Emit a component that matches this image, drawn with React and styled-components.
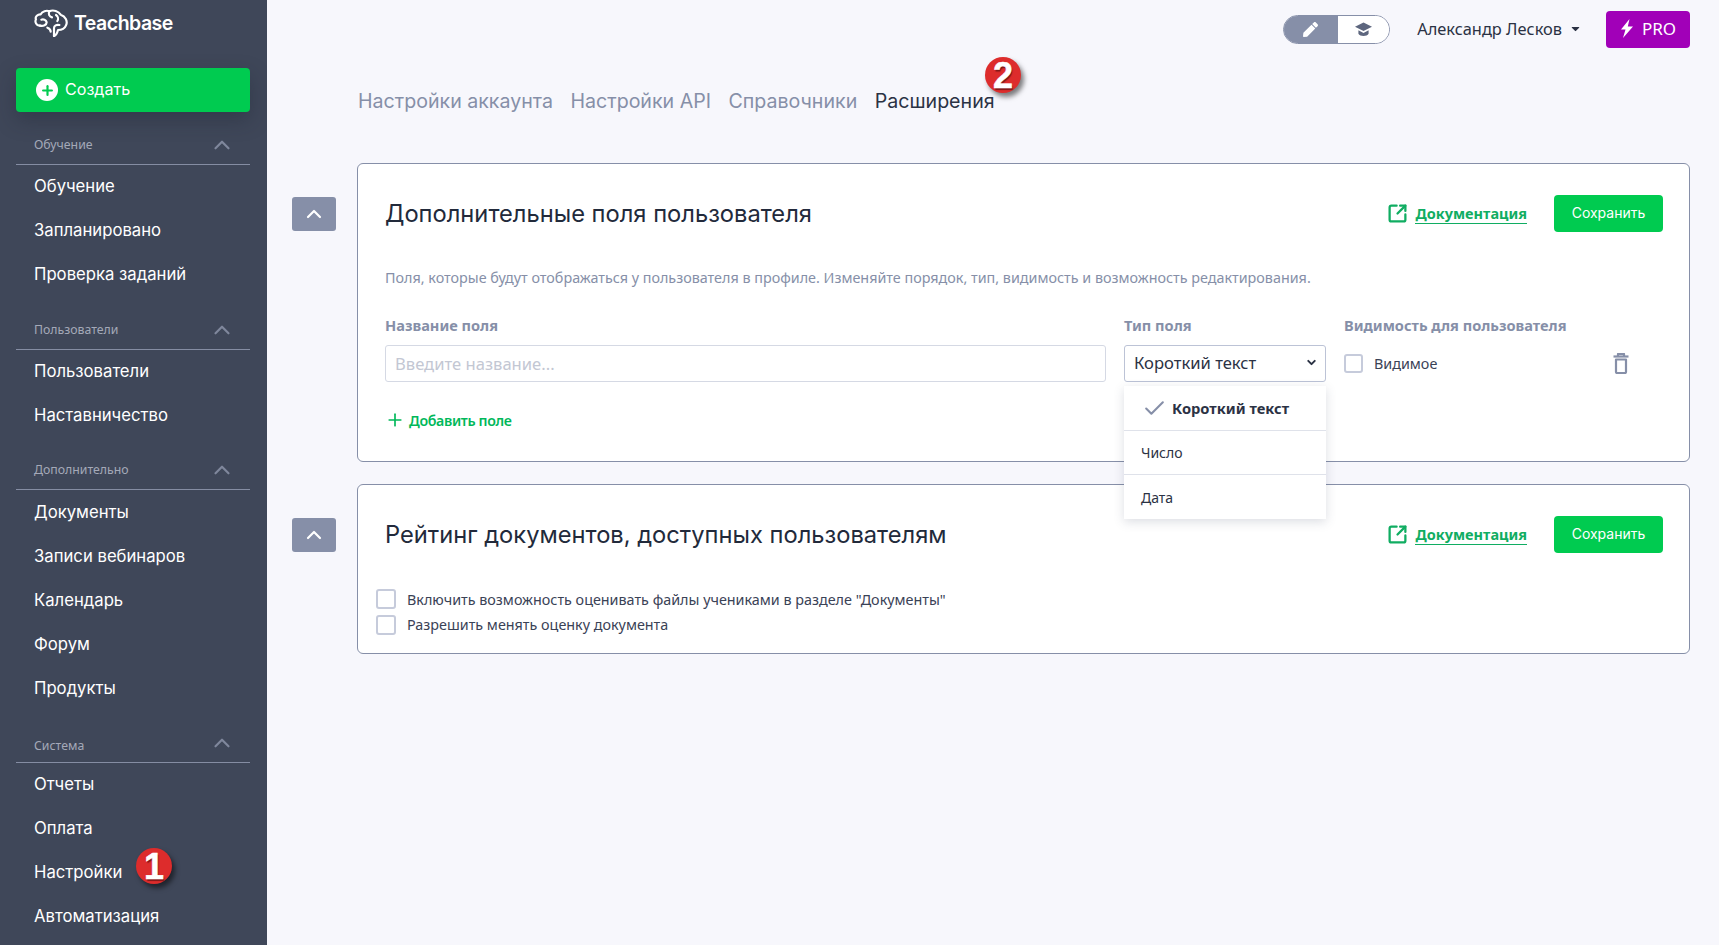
import styled, { createGlobalStyle } from 'styled-components';
import { FaPen, FaCaretDown } from 'react-icons/fa';
import { Check, ChevronDown, ChevronUp, Plus, SquareArrowOutUpRight } from 'lucide-react';

const GlobalStyle = createGlobalStyle`
  html, body {
    margin: 0;
    height: 100%;
    background: #f7f7fc;
    font-family: "Noto Sans", sans-serif;
    color: #2b3244;
    overflow: hidden;
  }
  * { box-sizing: border-box; }
`;

const Layout = styled.div`
  display: flex;
  height: 945px;
  overflow: hidden;
`;

const Sidebar = styled.aside`
  position: relative;
  width: 267px;
  flex-shrink: 0;
  background: #3f4759;
  padding: 0 17px 0 16px;
  overflow: hidden;
`;

const LogoRow = styled.div`
  display: flex;
  align-items: center;
  gap: 6px;
  height: 68px;
  padding: 0 0 22px 18px;
  color: #fff;
  font-family: Inter, sans-serif;
  font-weight: 600;
  font-size: 19.5px;
  letter-spacing: -0.5px;
`;

const CreateButton = styled.button`
  display: flex;
  align-items: center;
  gap: 7px;
  width: 100%;
  height: 44px;
  padding: 0 20px 2px;
  border: none;
  border-radius: 4px;
  background: #00cb50;
  color: #fff;
  font-family: Inter, sans-serif;
  font-size: 16.1px;
  box-shadow: 0 8px 20px rgba(30, 34, 48, 0.35);
`;

const PlusCircle = styled.span`
  display: flex;
  align-items: center;
  justify-content: center;
  width: 22px;
  height: 22px;
  margin-top: 2px;
  border-radius: 50%;
  background: #fff;
  color: #00cb50;
`;

const SectionHead = styled.div`
  display: flex;
  align-items: flex-end;
  justify-content: space-between;
  height: ${(p) => p.$height || 53}px;
  padding: 0 15px ${(p) => (p.$tight ? 8 : 11)}px 18px;
  border-bottom: 1px solid #858da3;
  color: #a4a9b8;
  font-size: 12.3px;
  line-height: 16px;
`;

const HeadChevron = styled(ChevronUp)`
  color: #7f879c;
  margin-bottom: ${(p) => (p.$tight ? -2 : -5)}px;
`;

const NavGroup = styled.div`
  padding-top: ${(p) => p.$offset || 0}px;
`;

const NavItem = styled.div`
  display: flex;
  align-items: center;
  height: 44px;
  padding: 0 0 2px 18px;
  color: #fff;
  font-family: Inter, sans-serif;
  font-size: 16.7px;
`;

const Marker = styled.span`
  position: absolute;
  left: ${(p) => p.$x}px;
  top: ${(p) => p.$y}px;
  display: flex;
  align-items: center;
  justify-content: center;
  width: 36px;
  height: 36px;
  padding-top: 1px;
  border-radius: 50%;
  background: #dd2c2c;
  color: #fff;
  font-family: "Liberation Sans", sans-serif;
  font-weight: 700;
  font-size: 36px;
  -webkit-text-stroke: 0.5px #fff;
  text-shadow: 1px 2px 1px rgba(110, 20, 20, 0.85);
  box-shadow: 3px 4px 5px rgba(0, 0, 0, 0.5);
  z-index: 5;
`;

const Main = styled.main`
  position: relative;
  flex: 1;
  min-width: 0;
  padding: 11px 29px 0 25px;
`;

const TopBar = styled.header`
  display: flex;
  justify-content: flex-end;
  align-items: center;
  height: 37px;
`;

const ModeToggle = styled.div`
  display: flex;
  width: 107px;
  height: 29px;
  border: 1px solid #868fa8;
  border-radius: 15px;
  overflow: hidden;
`;

const ModeItem = styled.span`
  display: flex;
  align-items: center;
  justify-content: center;
  width: ${(p) => (p.$active ? 54 : 52)}px;
  background: ${(p) => (p.$active ? '#868fa8' : '#fff')};
  color: ${(p) => (p.$active ? '#fff' : '#5d667e')};
`;

const UserMenu = styled.div`
  display: flex;
  align-items: center;
  gap: 7px;
  margin: 0 24px 2px 27px;
  font-size: 16.4px;
  color: #2b3244;
`;

const ProButton = styled.button`
  display: flex;
  align-items: center;
  justify-content: center;
  gap: 9px;
  width: 84px;
  height: 37px;
  padding: 0 0 2px;
  border: none;
  border-radius: 4px;
  background: #a100b8;
  color: #fff;
  font-family: "Noto Sans", sans-serif;
  font-size: 17px;
`;

const Tabs = styled.nav`
  display: flex;
  gap: 17.5px;
  height: 34px;
  margin: 36px 0 45px 66px;
  align-items: center;
`;

const Tab = styled.a`
  font-family: Inter, sans-serif;
  font-size: 19.6px;
  color: ${(p) => (p.$active ? '#2b3244' : '#868fa8')};
`;

const CardRow = styled.div`
  display: flex;
  align-items: flex-start;
  gap: 21px;
  margin-bottom: 22px;
`;

const CollapseButton = styled.button`
  display: flex;
  align-items: center;
  justify-content: center;
  flex-shrink: 0;
  width: 44px;
  height: 34px;
  margin-top: 34px;
  border: none;
  border-radius: 3px;
  background: #868fa8;
  color: #fff;
`;

const Card = styled.section`
  position: relative;
  flex: 1;
  height: ${(p) => p.$height}px;
  padding: 31px 26px 0 27px;
  background: #fff;
  border: 1px solid #868fa8;
  border-radius: 6px;
`;

const CardHead = styled.div`
  display: flex;
  align-items: center;
  height: 37px;
`;

const CardTitle = styled.h2`
  flex: 1;
  margin: 0;
  font-family: Inter, sans-serif;
  font-weight: 400;
  font-size: 23.7px;
  color: #222a3b;
`;

const DocLink = styled.a`
  display: flex;
  align-items: center;
  gap: 7px;
  margin-right: 27px;
  color: #10ad62;
  font-size: 14.5px;
  font-weight: 700;
`;

const DocText = styled.span`
  padding-bottom: 1px;
  border-bottom: 1px solid #10ad62;
  line-height: 18px;
`;

const SaveButton = styled.button`
  width: 109px;
  height: 37px;
  padding: 0 0 2px;
  border: none;
  border-radius: 4px;
  background: #00cb50;
  color: #fff;
  font-family: Inter, sans-serif;
  font-size: 14px;
`;

const Description = styled.p`
  margin: 36px 0 0;
  font-size: 14.35px;
  line-height: 20px;
  color: #868fa8;
`;

const FieldGrid = styled.div`
  display: grid;
  grid-template-columns: 721px 202px 1fr;
  column-gap: 18px;
  margin-top: 27px;
`;

const FieldLabel = styled.div`
  margin-bottom: 10px;
  font-size: 14.6px;
  font-weight: 700;
  line-height: 20px;
  color: #868fa8;
`;

const TextInput = styled.input`
  width: 100%;
  height: 37px;
  padding: 0 9px;
  border: 1px solid #d5d9e4;
  border-radius: 3px;
  font-family: "Noto Sans", sans-serif;
  font-size: 16.6px;
  &::placeholder { color: #c3c7d3; }
`;

const SelectBox = styled.div`
  display: flex;
  align-items: center;
  justify-content: space-between;
  height: 37px;
  padding: 0 7px 2px 9px;
  border: 1px solid #bcc3d6;
  border-radius: 3px;
  font-size: 16.6px;
`;

const SelectWrap = styled.div`
  position: relative;
`;

const Dropdown = styled.ul`
  position: absolute;
  top: 41px;
  left: 0;
  width: 100%;
  margin: 0;
  padding: 0;
  list-style: none;
  background: #fff;
  box-shadow: 0 3px 10px rgba(60, 70, 100, 0.18);
  z-index: 3;
`;

const Option = styled.li`
  display: flex;
  align-items: center;
  gap: 5px;
  height: ${(p) => p.$height}px;
  padding-left: ${(p) => (p.$selected ? 18 : 17)}px;
  font-size: ${(p) => (p.$selected ? 14.7 : 14)}px;
  font-weight: ${(p) => (p.$selected ? 700 : 400)};
  border-bottom: ${(p) => (p.$last ? 'none' : '1px solid #dfe2ea')};
`;

const CheckLine = styled.label`
  display: flex;
  align-items: center;
  gap: ${(p) => p.$gap}px;
  height: ${(p) => p.$height}px;
  font-size: 14.35px;
  color: #3a4256;
`;

const Box = styled.span`
  flex-shrink: 0;
  width: ${(p) => p.$size}px;
  height: ${(p) => p.$size}px;
  border: 2px solid #c6cbdb;
  border-radius: 3px;
  background: #fff;
`;

const VisibleRow = styled.div`
  display: flex;
  align-items: center;
  justify-content: space-between;
  height: 37px;
  padding-right: 34px;
`;

const AddField = styled.a`
  display: flex;
  align-items: center;
  gap: 4px;
  margin: 28px 0 0;
  color: #00b85a;
  font-size: 14.2px;
  font-weight: 600;
  letter-spacing: -0.35px;
`;

const CheckList = styled.div`
  margin: 33.500px 0 0 -9px;
`;

const navSections = [
  { title: 'Обучение', items: ['Обучение', 'Запланировано', 'Проверка заданий'] },
  { title: 'Пользователи', items: ['Пользователи', 'Наставничество'] },
  { title: 'Дополнительно', height: 52, offset: 1, items: ['Документы', 'Записи вебинаров', 'Календарь', 'Форум', 'Продукты'] },
  { title: 'Система', tight: true, height: 52, items: ['Отчеты', 'Оплата', 'Настройки', 'Автоматизация'] },
];

const tabs = ['Настройки аккаунта', 'Настройки API', 'Справочники', 'Расширения'];

function BrainLogo() {
  return (
    <svg width="34" height="28" viewBox="0 0 102 84" fill="none" stroke="#fff" strokeWidth="6.5" strokeLinecap="round" strokeLinejoin="round">
      <path d="M18 50C6 50 2 38 6 31C2 23 12 15 20 16C24 7 38 3 46 7C58 1 74 7 80 17C94 21 102 37 96 49C92 59 82 63 72 63C70 71 66 79 60 81" />
      <path d="M18 50C28 52 38 48 38 40C36 32 28 30 22 32" />
      <path d="M46 7C42 15 46 23 54 25" />
      <path d="M60 81V58C60 50 68 46 76 48" />
      <path d="M66 18C72 22 74 30 70 36" />
      <path d="M40 56C46 58 50 62 50 68" />
    </svg>
  );
}

function CapIcon() {
  return (
    <svg width="17" height="15" viewBox="0 0 17 15" fill="currentColor">
      <path d="M8.500 0.500L17 4.700L8.500 9L0 4.700Z" />
      <path d="M3.400 8.300V11.700C5 14.600 12 14.600 13.600 11.700V8.300L8.500 10.900Z" />
    </svg>
  );
}

function BoltIcon() {
  return (
    <svg width="13" height="19" viewBox="0 0 13 19" fill="#fff">
      <path d="M9.500 0L1 10.500H5.500L3 19L13 7.500H7.800Z" />
    </svg>
  );
}

function TrashIcon() {
  return (
    <svg width="16" height="21" viewBox="0 0 16 21" fill="none" stroke="#868fa8" strokeWidth="2.2" strokeLinejoin="round">
      <path d="M0.500 3.500H15.500" />
      <path d="M5 3V1H11V3" />
      <path d="M3 6.500H13V19C13 19.500 12.500 20 12 20H4C3.500 20 3 19.500 3 19Z" />
    </svg>
  );
}

function App() {
  return (
    <Layout>
      <GlobalStyle />
      <Sidebar>
        <LogoRow>
          <BrainLogo />
          Teachbase
        </LogoRow>
        <CreateButton>
          <PlusCircle><Plus size={15} strokeWidth={3.5} /></PlusCircle>
          Создать
        </CreateButton>
        {navSections.map((section) => (
          <div key={section.title}>
            <SectionHead $tight={section.tight} $height={section.height}>
              {section.title}
              <HeadChevron size={26} strokeWidth={2} $tight={section.tight} />
            </SectionHead>
            <NavGroup $offset={section.offset}>
              {section.items.map((item) => (
                <NavItem key={item}>{item}</NavItem>
              ))}
            </NavGroup>
          </div>
        ))}
        <Marker $x={136} $y={848}>1</Marker>
      </Sidebar>
      <Main>
        <TopBar>
          <ModeToggle>
            <ModeItem $active><FaPen size={15} /></ModeItem>
            <ModeItem><CapIcon /></ModeItem>
          </ModeToggle>
          <UserMenu>
            Александр Лесков
            <FaCaretDown size={13} color="#2b3244" />
          </UserMenu>
          <ProButton><BoltIcon />PRO</ProButton>
        </TopBar>
        <Tabs>
          {tabs.map((tab) => (
            <Tab key={tab} $active={tab === 'Расширения'}>{tab}</Tab>
          ))}
        </Tabs>
        <Marker $x={718} $y={57}>2</Marker>
        <CardRow>
          <CollapseButton><ChevronUp size={24} strokeWidth={2.2} /></CollapseButton>
          <Card $height={299}>
            <CardHead>
              <CardTitle>Дополнительные поля пользователя</CardTitle>
              <DocLink>
                <SquareArrowOutUpRight size={21} strokeWidth={2.6} />
                <DocText>Документация</DocText>
              </DocLink>
              <SaveButton>Сохранить</SaveButton>
            </CardHead>
            <Description>
              Поля, которые будут отображаться у пользователя в профиле. Изменяйте порядок, тип, видимость и возможность редактирования.
            </Description>
            <FieldGrid>
              <div>
                <FieldLabel>Название поля</FieldLabel>
                <TextInput placeholder="Введите название..." />
                <AddField><Plus size={20} strokeWidth={2} />Добавить поле</AddField>
              </div>
              <div>
                <FieldLabel>Тип поля</FieldLabel>
                <SelectWrap>
                  <SelectBox>
                    Короткий текст
                    <ChevronDown size={13} strokeWidth={3.6} />
                  </SelectBox>
                  <Dropdown>
                    <Option $selected $height={45}>
                      <Check size={25} color="#868fa8" strokeWidth={2} />
                      Короткий текст
                    </Option>
                    <Option $height={44}>Число</Option>
                    <Option $last $height={44}>Дата</Option>
                  </Dropdown>
                </SelectWrap>
              </div>
              <div>
                <FieldLabel>Видимость для пользователя</FieldLabel>
                <VisibleRow>
                  <CheckLine $gap={11} $height={37}>
                    <Box $size={19} />
                    Видимое
                  </CheckLine>
                  <TrashIcon />
                </VisibleRow>
              </div>
            </FieldGrid>
          </Card>
        </CardRow>
        <CardRow>
          <CollapseButton><ChevronUp size={24} strokeWidth={2.2} /></CollapseButton>
          <Card $height={170}>
            <CardHead>
              <CardTitle>Рейтинг документов, доступных пользователям</CardTitle>
              <DocLink>
                <SquareArrowOutUpRight size={21} strokeWidth={2.6} />
                <DocText>Документация</DocText>
              </DocLink>
              <SaveButton>Сохранить</SaveButton>
            </CardHead>
            <CheckList>
              <CheckLine $gap={11} $height={25.5}>
                <Box $size={20} />
                Включить возможность оценивать файлы учениками в разделе "Документы"
              </CheckLine>
              <CheckLine $gap={11} $height={25.5}>
                <Box $size={20} />
                Разрешить менять оценку документа
              </CheckLine>
            </CheckList>
          </Card>
        </CardRow>
      </Main>
    </Layout>
  );
}

export default App;
